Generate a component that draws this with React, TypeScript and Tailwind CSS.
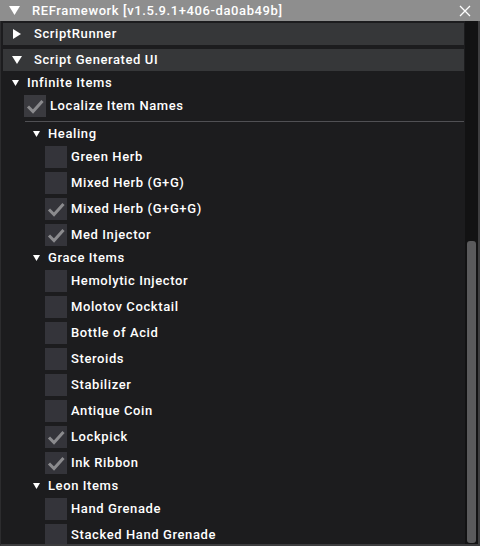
import React from "react"

type Item = { label: string; checked: boolean }
type Group = { name: string; items: Item[] }

const groups: Group[] = [
  {
    name: "Healing",
    items: [
      { label: "Green Herb", checked: false },
      { label: "Mixed Herb (G+G)", checked: false },
      { label: "Mixed Herb (G+G+G)", checked: true },
      { label: "Med Injector", checked: true },
    ],
  },
  {
    name: "Grace Items",
    items: [
      { label: "Hemolytic Injector", checked: false },
      { label: "Molotov Cocktail", checked: false },
      { label: "Bottle of Acid", checked: false },
      { label: "Steroids", checked: false },
      { label: "Stabilizer", checked: false },
      { label: "Antique Coin", checked: false },
      { label: "Lockpick", checked: true },
      { label: "Ink Ribbon", checked: true },
    ],
  },
  {
    name: "Leon Items",
    items: [
      { label: "Hand Grenade", checked: false },
      { label: "Stacked Hand Grenade", checked: false },
    ],
  },
]

function Arrow({ open, size = 10 }: { open: boolean; size?: number }) {
  return (
    <svg width={size} height={size} viewBox="0 0 10 10" className="shrink-0">
      {open ? <polygon points="0,1 10,1 5,9" fill="#ffffff" /> : <polygon points="1,0 9,5 1,10" fill="#ffffff" />}
    </svg>
  )
}

function Checkbox({ checked, dim }: { checked: boolean; dim?: boolean }) {
  return (
    <div className={`w-[22px] h-[22px] shrink-0 flex items-center justify-center ${dim ? "bg-[#3a3a3f]" : "bg-[#34343a]"}`}>
      {checked && (
        <svg width="22" height="22" viewBox="0 0 22 22">
          <path d="M4 11.5 L9 16.5 L18.5 6" fill="none" stroke="#8b8b8e" strokeWidth="3" />
        </svg>
      )}
    </div>
  )
}

function Header({ title, open }: { title: string; open: boolean }) {
  return (
    <div className="h-[22px] bg-[#363739] flex items-center pl-[9px] gap-[12px]">
      <Arrow open={open} />
      <span>{title}</span>
    </div>
  )
}

function TreeNode({ label, indent }: { label: string; indent: number }) {
  return (
    <div className="h-[16px] my-[4px] flex items-center" style={{ paddingLeft: indent }}>
      <svg width="7" height="6" viewBox="0 0 7 6" className="shrink-0">
        <polygon points="0,0 7,0 3.5,6" fill="#ffffff" />
      </svg>
      <span className="ml-[8px]">{label}</span>
    </div>
  )
}

function CheckRow({ item, indent }: { item: Item; indent: number }) {
  return (
    <div className="h-[22px] mb-[4px] flex items-center gap-[4px]" style={{ paddingLeft: indent }}>
      <Checkbox checked={item.checked} />
      <span>{item.label}</span>
    </div>
  )
}

export default function App() {
  return (
    <div
      className="w-[480px] h-[546px] bg-[#1c1c1e] text-white text-[13px] font-medium flex flex-col overflow-hidden tracking-[0.6px]"
      style={{ fontFamily: "Roboto, 'Noto Sans', sans-serif" }}
    >
      <div className="h-[21px] shrink-0 bg-[#8e8e8e] flex items-center pl-[9px] pr-[9px]">
        <Arrow open size={11} />
        <span className="ml-[12px] flex-1">REFramework [v1.5.9.1+406-da0ab49b]</span>
        <svg width="12" height="12" viewBox="0 0 12 12">
          <path d="M1 1 L11 11 M11 1 L1 11" stroke="#ffffff" strokeWidth="1.3" />
        </svg>
      </div>

      <div className="flex flex-1 min-h-0 border-l border-[#2c2c2e] border-b-[2px] border-b-[#3c3c3e]">
        <div className="flex-1 overflow-hidden pt-[2px] pl-[2px] pr-[1px]">
          <div className="flex flex-col gap-[4px]">
            <Header title="ScriptRunner" open={false} />
            <Header title="Script Generated UI" open />
          </div>

          <TreeNode label="Infinite Items" indent={9} />
          <div className="h-[22px] flex items-center gap-[4px] pl-[21px]">
            <Checkbox checked dim />
            <span>Localize Item Names</span>
          </div>
          <div className="ml-[22px] mt-[4px] h-px bg-[#505054]" />

          {groups.map((g) => (
            <div key={g.name}>
              <TreeNode label={g.name} indent={30} />
              {g.items.map((it) => (
                <CheckRow key={it.label} item={it} indent={42} />
              ))}
            </div>
          ))}
        </div>

        <div className="w-[13px] shrink-0 bg-[#121213] flex flex-col pt-[220px] pb-[1px] items-center">
          <div className="w-[9px] flex-1 rounded-[3px] bg-[#5a5a5c]" />
        </div>
        <div className="w-[2px] shrink-0 bg-[#3e3e40]" />
      </div>
    </div>
  )
}
